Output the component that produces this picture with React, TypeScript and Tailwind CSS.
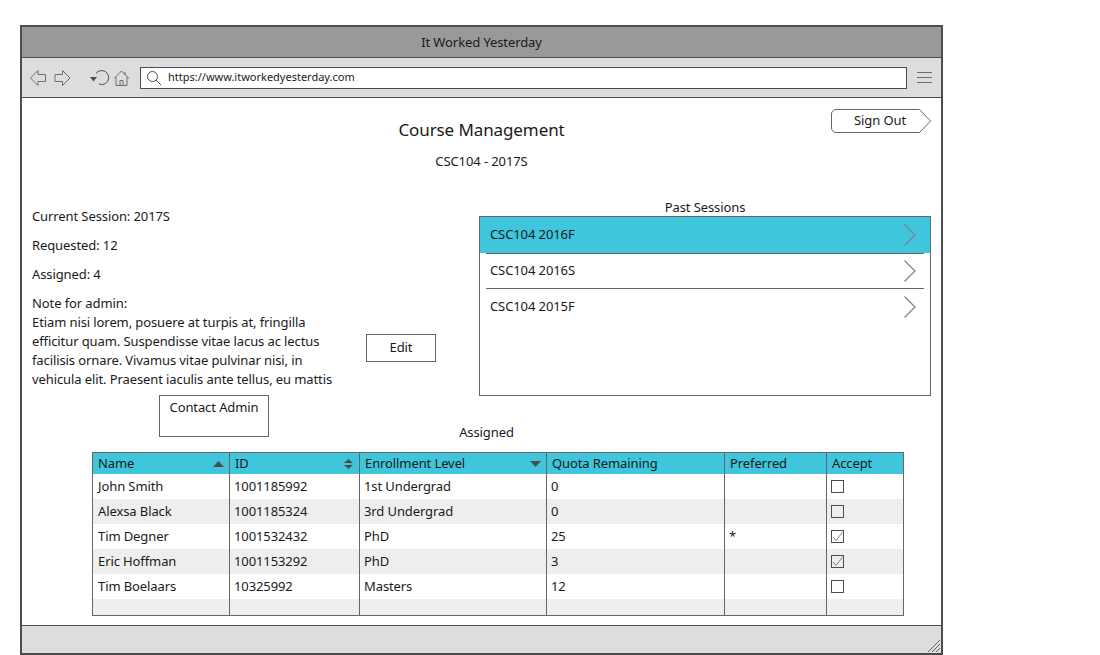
const rows = [
  ["John Smith", "1001185992", "1st Undergrad", "0", "", false],
  ["Alexsa Black", "1001185324", "3rd Undergrad", "0", "", false],
  ["Tim Degner", "1001532432", "PhD", "25", "*", true],
  ["Eric Hoffman", "1001153292", "PhD", "3", "", true],
  ["Tim Boelaars", "10325992", "Masters", "12", "", false],
] as const;

const gridCols = "grid grid-cols-[137px_130px_187px_178px_102px_76px]";

function Chevron() {
  return (
    <svg width="14" height="24" viewBox="0 0 14 24" fill="none" stroke="#808080" strokeWidth="1.2">
      <path d="M1.5 1.5 12 12 1.5 22.5" />
    </svg>
  );
}

function Checkbox({ checked }: { checked: boolean }) {
  return (
    <svg width="14" height="14" viewBox="0 0 14 14" fill="none" className="block">
      <rect x="0.5" y="0.5" width="12" height="12" stroke="#4d4d4d" fill="none" />
      <path d="M2 7 5 10.5 12 1.5" stroke="#808080" strokeWidth="1" opacity={checked ? 1 : 0} />
    </svg>
  );
}

function HeaderCell({ label, sort, last }: { label: string; sort?: "up" | "both" | "down"; last?: boolean }) {
  return (
    <div className={`flex h-[21px] items-center justify-between pl-[5px] pr-[5px] ${last ? "" : "border-r border-[#666666]"}`}>
      <span>{label}</span>
      {sort === "up" && (
        <svg width="11" height="6" viewBox="0 0 11 6"><path d="M0 6 5.5 0 11 6Z" fill="#4d4d4d" /></svg>
      )}
      {sort === "down" && (
        <svg width="11" height="6" viewBox="0 0 11 6"><path d="M0 0 5.5 6 11 0Z" fill="#4d4d4d" /></svg>
      )}
      {sort === "both" && (
        <svg width="11" height="10" viewBox="0 0 11 10">
          <path d="M1 4 5.5 0 10 4Z" fill="#4d4d4d" />
          <path d="M1 6 5.5 10 10 6Z" fill="#4d4d4d" />
        </svg>
      )}
    </div>
  );
}

export default function App() {
  return (
    <div className="h-[655px] w-[1100px] overflow-hidden bg-white pl-5 pt-[25px] font-['Noto_Sans',sans-serif] text-[13px] tracking-[-0.1px] text-[#1a1a1a]">
      <div className="flex h-[630px] w-[923px] flex-col border-2 border-[#4d4d4d]">
        <div className="flex h-[31px] shrink-0 items-center justify-center border-b border-[#4d4d4d] bg-[#999999] pt-[1px]">
          It Worked Yesterday
        </div>
        <div className="flex h-[40px] shrink-0 items-center border-b border-[#4d4d4d] bg-[#dddddd] pl-2">
          <svg width="110" height="20" viewBox="0 0 110 20" fill="none" stroke="#6e6e6e" strokeWidth="1" className="shrink-0">
            <path d="M0.5 10 8 2.5V6.5H15.5V13.5H8V17.5Z" />
            <path d="M40 10 32.5 2.5V6.5H25V13.5H32.5V17.5Z" />
            <path d="M66 5.5A7 7 0 1 1 69 16" stroke="#4d4d4d" />
            <path d="M60 9H67L63.5 13.5Z" fill="#4d4d4d" stroke="none" />
            <path d="M84 10.5 91.5 3 99 10.5M86 9V17.5H97V9M90 17.5V12.5H93V17.5M95 4V7" />
          </svg>
          <div className="flex h-[22px] w-[767px] shrink-0 items-center border border-[#4d4d4d] bg-white text-[11px] tracking-normal">
            <svg width="16" height="16" viewBox="0 0 16 16" fill="none" stroke="#4d4d4d" className="ml-[5px] shrink-0">
              <circle cx="6.5" cy="6.5" r="5" />
              <path d="M10 10 15 15" />
            </svg>
            <span className="ml-[6px]">https://www.itworkedyesterday.com</span>
          </div>
          <div className="ml-[10px] flex w-[15px] flex-col gap-[4px]">
            <div className="h-px bg-[#6e6e6e]" />
            <div className="h-px bg-[#6e6e6e]" />
            <div className="h-px bg-[#6e6e6e]" />
          </div>
        </div>

        <div className="flex min-h-0 flex-1 flex-col bg-white pl-[10px]">
          <div className="grid h-[101px] shrink-0 grid-cols-[1fr_auto_1fr] pr-[10px]">
            <div />
            <div className="flex flex-col items-center">
              <div className="mt-[19px] text-[17px] leading-[26px]">Course Management</div>
              <div className="mt-[9px] leading-[18px]">CSC104 - 2017S</div>
            </div>
            <div className="flex justify-end pt-[11px]">
              <div className="relative flex h-[24px] w-[100px] items-center justify-center pr-[2px]">
                <svg width="100" height="24" viewBox="0 0 100 24" fill="none" stroke="#666666" className="absolute inset-0">
                  <path d="M5 0.5H88.5L99.5 12 88.5 23.5H5A4.5 4.5 0 0 1 0.5 19V5A4.5 4.5 0 0 1 5 0.5Z" />
                </svg>
                <span className="relative">Sign Out</span>
              </div>
            </div>
          </div>

          <div className="flex h-[238px] shrink-0 items-start">
            <div className="flex w-[334px] shrink-0 flex-col pt-[8px]">
              <div className="leading-[19px]">Current Session: 2017S</div>
              <div className="mt-[10px] leading-[19px]">Requested: 12</div>
              <div className="mt-[10px] leading-[19px]">Assigned: 4</div>
              <div className="mt-[10px] w-[312px] whitespace-nowrap leading-[19px]">
                <div>Note for admin:</div>
                <div>Etiam nisi lorem, posuere at turpis at, fringilla</div>
                <div>efficitur quam. Suspendisse vitae lacus ac lectus</div>
                <div>facilisis ornare. Vivamus vitae pulvinar nisi, in</div>
                <div>vehicula elit. Praesent iaculis ante tellus, eu mattis</div>
              </div>
              <div className="ml-[127px] mt-[6px] h-[42px] w-[110px] border border-[#666666] pt-[2px] text-center leading-[18px]">
                Contact Admin
              </div>
            </div>
            <div className="mt-[135px] flex h-[28px] w-[70px] shrink-0 items-center justify-center border border-[#666666]">
              Edit
            </div>
            <div className="ml-[43px] flex w-[452px] shrink-0 flex-col">
              <div className="h-[17px] text-center leading-[17px]">Past Sessions</div>
              <div className="flex h-[180px] flex-col border border-[#666666]">
                <div className="flex h-[36px] items-center justify-between bg-[#3fc6dc] pl-[10px] pr-[13px]">
                  <span>CSC104 2016F</span>
                  <Chevron />
                </div>
                <div className="mx-[6px] flex h-[36px] items-center justify-between border-t border-b border-[#666666] pl-[4px] pr-[7px]">
                  <span>CSC104 2016S</span>
                  <Chevron />
                </div>
                <div className="flex h-[36px] items-center justify-between pl-[10px] pr-[13px]">
                  <span>CSC104 2015F</span>
                  <Chevron />
                </div>
              </div>
            </div>
          </div>

          <div className="-mt-[13px] h-[17px] shrink-0 text-center leading-[17px]">Assigned</div>

          <div className="ml-[60px] mt-[11px] h-[164px] w-[812px] shrink-0 overflow-hidden border border-[#666666]">
            <div className={`${gridCols} bg-[#3fc6dc]`}>
              <HeaderCell label="Name" sort="up" />
              <HeaderCell label="ID" sort="both" />
              <HeaderCell label="Enrollment Level" sort="down" />
              <HeaderCell label="Quota Remaining" />
              <HeaderCell label="Preferred" />
              <HeaderCell label="Accept" last />
            </div>
            {rows.map((r, i) => (
              <div key={r[0]} className={`${gridCols} h-[25px] ${i % 2 === 1 ? "bg-[#eeeeee]" : "bg-white"}`}>
                <div className="flex items-center border-r border-[#666666] pl-[5px]">{r[0]}</div>
                <div className="flex items-center border-r border-[#666666] pl-[4px]">{r[1]}</div>
                <div className="flex items-center border-r border-[#666666] pl-[4px]">{r[2]}</div>
                <div className="flex items-center border-r border-[#666666] pl-[4px]">{r[3]}</div>
                <div className="flex items-center border-r border-[#666666] pl-[4px]">{r[4]}</div>
                <div className="pl-[4px] pt-[6px]"><Checkbox checked={r[5]} /></div>
              </div>
            ))}
            <div className={`${gridCols} h-[17px] bg-[#eeeeee]`}>
              <div className="border-r border-[#666666]" />
              <div className="border-r border-[#666666]" />
              <div className="border-r border-[#666666]" />
              <div className="border-r border-[#666666]" />
              <div className="border-r border-[#666666]" />
              <div />
            </div>
          </div>
        </div>

        <div className="flex h-[28px] shrink-0 items-end justify-end border-t border-[#4d4d4d] bg-[#dddddd]">
          <svg width="14" height="14" viewBox="0 0 14 14" fill="none" stroke="#666666">
            <path d="M1 13 13 1M5 13 13 5M9 13 13 9" />
          </svg>
        </div>
      </div>
    </div>
  );
}
